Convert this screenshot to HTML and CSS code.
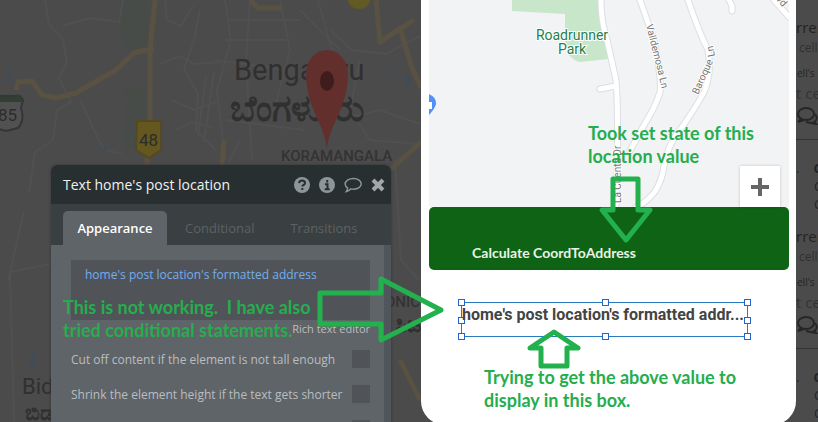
FILE: index.html
```
<!DOCTYPE html>
<html lang="en">
<head>
  <meta charset="UTF-8">
  <meta name="viewport" content="width=device-width, initial-scale=1">
  <title>Text home's post location</title>
  <link rel="stylesheet" href="styles.css">
</head>
<body>
  <main class="editor">

    <section class="desk">
      <svg class="city-map" viewBox="0 0 421 422" preserveAspectRatio="xMaxYMin slice" aria-hidden="true">
        <g class="green-area">
          <path d="M120 0h28v45l-14 10-14-20zM130 88h16v62h-22v-20zM122 88h9v14h-9z"/>
        </g>
        <g class="minor-roads">
          <path d="M45 0l4 24 14 16 4 22-8 16 12 24-14 8-4 30-18 12-6 40M63 26l26-8 30 4 4-22M80 100l14 30 10 20 18 4M165 0l2 20 14 6 12-20M160 64l20-8 14 8 26-2M200 10l-6 30-10 30 14 24-2 36 20 20M172 100l22 10 22-8M176 130l16-8 22 6M225 0l6 40-14 50 8 70M250 0l-4 60 6 100M280 0l10 50-16 60M330 30l22 20 34 4 34-18M360 60l-10 50 20 30 48 4M340 120l40-10 40 14M395 160l6 100 18 20M14 422l-4-150 40-8M24 211l-16 70"/>
          <path d="M230 20h70M226 40h60M215 60l70 10M225 120l80 10M240 140l-12 24M206 76l-8 60M214 72l-10 70M300 10l40 40M318 0l14 50"/>
        </g>
        <g class="main-roads">
          <path d="M155 0l-5 50v70M147 150v20M16 90l2-8 14-1 10 14 14 3 20-5 40-23 18-17 12-3h8M250 0l8 8h24M376 0l4 42 34-22M380 42l20-14 12 40 9 20M390 170l31-28M224 140l-2 25M400 360l20 40"/>
        </g>
        <circle class="town" cx="359" cy="-3" r="12"/>
        <path class="lake" d="M11 58v24l-10-2 8-4zM107 138v13h-4zM408 74l5 6-5 6-5-6zM388 68h4v6h-4zM30 362l6-20v26h-8z"/>
        <g class="shield">
          <path class="shield-white" d="M-8 96h28l3 4-2 8q4 12-3 20l-12 3-14-4z"/>
          <path class="shield-top" d="M-8 94l12 3 4-3 4 3 6-3 5 5-2 3H-8z"/>
          <path class="shield-yellow" d="M137 121h24v29l-12 8-13-8z"/>
        </g>
        <text class="route" x="-2" y="121">85</text>
        <text class="route" x="139" y="146">48</text>
        <text class="city" x="234" y="80">Bengaluru</text>
        <text class="city kannada" x="230" y="121">ಬೆಂಗಳೂರು</text>
        <text class="suburb" x="281" y="161">KORAMANGALA</text>
        <text class="place" x="22" y="394">Bidadi</text>
        <text class="place kannada" x="25" y="420">ಬಿಡದಿ</text>
        <text class="suburb end" x="420" y="307">ELECTRONIC</text>
        <text class="place kannada end" x="421" y="332">ಸಿಟಿ</text>
        <path class="marker" d="M327 149c-2-24-21-42-21-75a21 24 0 0 1 42 0c0 33-19 51-21 75z"/>
        <ellipse class="marker-dot" cx="327" cy="81" rx="7" ry="10"/>
      </svg>

      <div class="panel">
        <header class="panel-header">
          <h1>Text home's post location</h1>
          <div class="panel-tools">
            <button type="button" aria-label="Help">
              <svg width="16" height="16" viewBox="0 0 16 16"><circle cx="8" cy="8" r="8"/><path class="cut" d="M5 6.2q.3-2.7 3-2.7t3 2.4q0 1.3-1.5 2.1-1.1.6-1.1 1.6"/><path class="cut" d="M8.3 11v2"/></svg>
            </button>
            <button type="button" aria-label="Info">
              <svg width="16" height="16" viewBox="0 0 16 16"><circle cx="8" cy="8" r="8"/><path class="cut" d="M8.2 3v2.4M6 7.2h2.5V12M5.7 12.2h5"/></svg>
            </button>
            <button type="button" aria-label="Comment">
              <svg width="18" height="16" viewBox="0 0 18 16"><path class="line" d="M9.5 1.5c4.500 0 7.700 2.400 7.700 5.400s-3.200 5.400-7.700 5.400q-1.500 0-2.800-.4-1.800 2-4.300 2.600 1.300-1.700 1.200-3.600Q1.200 9.400 1.200 6.900c0-3 3.600-5.400 8.300-5.400z"/></svg>
            </button>
            <button type="button" aria-label="Close">
              <svg width="14" height="14" viewBox="0 0 14 14"><path class="cross" d="M2 2l10 10M12 2L2 12"/></svg>
            </button>
          </div>
        </header>
        <nav class="tabs">
          <button type="button" class="tab active">Appearance</button>
          <button type="button" class="tab">Conditional</button>
          <button type="button" class="tab">Transitions</button>
        </nav>
        <div class="panel-body">
          <div class="expression"><a href="#">home's post location's formatted address</a></div>
          <a class="rich-text" href="#">Rich text editor</a>
          <div class="option">
            <label for="cutOff">Cut off content if the element is not tall enough</label>
            <input type="checkbox" id="cutOff">
          </div>
          <div class="option">
            <label for="shrink">Shrink the element height if the text gets shorter</label>
            <input type="checkbox" id="shrink">
          </div>
          <div class="option">
            <label for="collapse"></label>
            <input type="checkbox" id="collapse" aria-label="Collapse when hidden">
          </div>
        </div>
      </div>

      <p class="note note-panel">This is not working.&nbsp; I have also<br>tried conditional statements.</p>
      <svg class="arrow arrow-right" width="128" height="70" viewBox="0 0 128 70"><path d="M3 19h61V5l60 31-60 30V50H3z"/></svg>
    </section>

    <section class="phone">
      <div class="street-map">
        <svg viewBox="0 0 360 207" preserveAspectRatio="xMidYMin slice">
          <path class="park" d="M83 0h87l9 59-28 3q-6-1-12-8l-3-8V14l-53-3z"/>
          <path class="street-edge" d="M172 0q0 22 6 40l9 40q3 30 0 127M171 89l16-3M211 0l14 40q8 40 6 52-4 14-16 33l-14 26M259 0q10 30 20 50 4 24-4 42-6 12-24 38-12 14-16 36-4 30-28 41M300 0l3 6v5M345 0l15 17"/>
          <path class="street" d="M172 0q0 22 6 40l9 40q3 30 0 127M171 89l16-3M211 0l14 40q8 40 6 52-4 14-16 33l-14 26M259 0q10 30 20 50 4 24-4 42-6 12-24 38-12 14-16 36-4 30-28 41M300 0l3 6v5M345 0l15 17"/>
          <path class="poi" d="M-1 94q8 2 8 10-1 5-8 12z"/>
          <path class="poi-mark" d="M0 102h3v7H0z"/>
          <text class="park-name" x="143" y="40">Roadrunner</text>
          <text class="park-name" x="143" y="54">Park</text>
          <text class="street-name" transform="translate(217 25) rotate(76)">Valldemosa Ln</text>
          <text class="street-name" transform="translate(269 95) rotate(-66)">Baroque</text>
          <text class="street-name" transform="translate(286 56) rotate(-102)">Ln</text>
          <text class="street-name" transform="translate(192 203) rotate(-90)">La Cuenta Dr</text>
          <text class="street-name" transform="translate(341 -7) rotate(48)">Blvd</text>
        </svg>
        <button type="button" class="zoom-in" aria-label="Zoom in">
          <svg width="18" height="18" viewBox="0 0 18 18"><path d="M9 0v18M0 9h18"/></svg>
        </button>
      </div>
      <button type="button" class="calculate">Calculate CoordToAddress</button>
      <div class="selected-text">
        home's post location's formatted addr...
        <i class="handle tl"></i><i class="handle tc"></i><i class="handle tr"></i>
        <i class="handle ml"></i><i class="handle mr"></i>
        <i class="handle bl"></i><i class="handle bc"></i><i class="handle br"></i>
      </div>

      <p class="note note-map">Took set state of this<br>location value</p>
      <svg class="arrow arrow-down" width="56" height="70" viewBox="0 0 56 70"><path d="M15 4h25v31h12L28 65 4 35h11z"/></svg>
      <svg class="arrow arrow-up" width="56" height="42" viewBox="0 0 56 42"><path d="M28 4l24 16H41v18H15V20H4z"/></svg>
      <p class="note note-box">Trying to get the above value to<br>display in this box.</p>
    </section>

    <aside class="feed">
      <article class="post">
        <h2>rrent</h2>
        <p class="sub">cell's</p>
        <p class="small">ell's</p>
        <p class="large">t cell</p>
        <svg width="22" height="18" viewBox="0 0 22 18"><ellipse cx="10" cy="7" rx="8" ry="6"/><path d="M5 12l-3 3 6-2M19 7q4 5-1 8l2 2-5-1-5-1"/></svg>
      </article>
      <article class="post short">
        <p>.<b>C</b></p>
        <p class="second">C</p>
        <p class="third">C</p>
      </article>
      <article class="post">
        <h2>rrent</h2>
        <p class="sub">cell's</p>
        <p class="small">ell's</p>
        <p class="large">t cell</p>
        <svg width="22" height="18" viewBox="0 0 22 18"><ellipse cx="10" cy="7" rx="8" ry="6"/><path d="M5 12l-3 3 6-2M19 7q4 5-1 8l2 2-5-1-5-1"/></svg>
      </article>
      <article class="post short">
        <p>.<b>C</b></p>
        <p class="second">C</p>
        <p class="third">C</p>
      </article>
    </aside>

  </main>
</body>
</html>
```
FILE: styles.css
```
* {
  box-sizing: border-box;
}
body {
  margin: 0;
  font-family: "Open Sans", sans-serif;
  background: #4b4b4b;
}
h1, h2, p {
  margin: 0;
}
button {
  border: none;
  padding: 0;
  background: none;
  font-family: inherit;
  cursor: pointer;
}
a {
  text-decoration: none;
}
.editor {
  display: grid;
  grid-template-columns: 1fr 375px 22px;
  align-items: start;
  height: 100vh;
  overflow: hidden;
}

/* map behind the property panel */
.desk {
  position: relative;
  z-index: 2;
  min-height: 100vh;
  padding: 165px 30px 0 51px;
}
.city-map {
  position: absolute;
  top: 0;
  left: 0;
  width: 100%;
  height: 100vh;
  background: #4b4b4b;
  font-family: Roboto, sans-serif;
}
.green-area {
  fill: #484c48;
}
.minor-roads {
  fill: none;
  stroke: #505050;
  stroke-width: 2;
}
.main-roads {
  fill: none;
  stroke: #595242;
  stroke-width: 5;
  stroke-linejoin: round;
}
.town {
  fill: #625a22;
}
.lake {
  fill: #434c54;
}
.shield-white {
  fill: #515151;
  stroke: #353535;
  stroke-width: 2;
}
.shield-top {
  fill: #343d34;
}
.shield-yellow {
  fill: #64571f;
  stroke: #534a23;
  stroke-width: 2;
}
.route {
  font-size: 17px;
  fill: #2c2c2c;
}
.city {
  font-size: 29px;
  fill: #303030;
}
.suburb {
  font-size: 15px;
  font-weight: 500;
  fill: #333;
}
.place {
  font-size: 22px;
  fill: #303030;
}
.end {
  text-anchor: end;
}
.kannada {
  font-family: "Noto Sans", sans-serif;
  font-weight: bold;
}
.city.kannada {
  font-size: 36px;
}
.marker {
  fill: #622f2d;
}
.marker-dot {
  fill: #3e1d1c;
}

/* property panel */
.panel {
  position: relative;
  height: 280px;
  border-radius: 6px 6px 0 0;
  background: #5f6468;
  box-shadow: 0 0 3px #333;
  overflow: hidden;
}
.panel-header {
  display: flex;
  align-items: center;
  justify-content: space-between;
  height: 39px;
  padding: 0 6px 0 12px;
  background: #272f31;
}
.panel-header h1 {
  font-size: 14px;
  font-weight: normal;
  color: #f1f1f1;
}
.panel-tools {
  display: flex;
  align-items: center;
  gap: 9px;
}
.panel-tools button {
  display: flex;
}
.panel-tools svg {
  fill: #8e9598;
}
.panel-tools .cut {
  fill: none;
  stroke: #272f31;
  stroke-width: 2;
}
.panel-tools .line {
  fill: none;
  stroke: #8e9598;
  stroke-width: 1.5;
}
.panel-tools .cross {
  stroke: #a2a8aa;
  stroke-width: 4;
}
.tabs {
  display: flex;
  align-items: flex-end;
  height: 41px;
  padding: 0 12px;
  background: #3a3f41;
}
.tab {
  height: 34px;
  padding: 0 18px;
  border-radius: 5px 5px 0 0;
  font-size: 13px;
  color: #5c6265;
}
.tab.active {
  width: 104px;
  padding: 0;
  background: #5f6468;
  font-weight: 600;
  color: #fff;
}
.panel-body {
  display: flex;
  flex-direction: column;
  min-height: 200px;
  padding: 15px 14px 0 20px;
  border-right: 7px solid #50565b;
}
.expression {
  height: 60px;
  padding: 5px 14px;
  background: #505459;
  font-size: 12px;
  line-height: 20px;
}
.expression a {
  color: #72aef0;
}
.rich-text {
  align-self: flex-end;
  margin-bottom: 12px;
  font-size: 11px;
  line-height: 18px;
  color: #bbbfc2;
}
.option {
  display: flex;
  align-items: center;
  justify-content: space-between;
  height: 18px;
  margin-bottom: 17px;
  font-size: 12px;
  color: #b9bdc0;
  white-space: nowrap;
}
.option input {
  appearance: none;
  width: 18px;
  height: 18px;
  margin: 0;
  background: #505459;
}

/* hand drawn notes */
.note {
  position: absolute;
  font-family: Lato, sans-serif;
  font-size: 18px;
  font-weight: bold;
  line-height: 23px;
  color: #26ad4d;
  white-space: nowrap;
}
.arrow {
  position: absolute;
  fill: none;
  stroke: #22b14c;
  stroke-width: 5;
  stroke-linejoin: round;
}
.note-panel {
  top: 296px;
  left: 63px;
}
.arrow-right {
  top: 274px;
  right: -24px;
}
.note-map {
  top: 122px;
  left: 167px;
}
.arrow-down {
  top: 175px;
  left: 177px;
}
.arrow-up {
  top: 328px;
  left: 105px;
}
.note-box {
  top: 366px;
  left: 63px;
}

/* phone page */
.phone {
  position: relative;
  padding: 0 7px 88px 8px;
  border-radius: 0 0 24px 24px;
  background: #fff;
}
.street-map {
  position: relative;
  height: 207px;
  background: #f1f3f4;
}
.street-map > svg {
  display: block;
  width: 100%;
  height: 100%;
  font-family: Roboto, sans-serif;
}
.park {
  fill: #c8e6c9;
}
.street-edge {
  fill: none;
  stroke: #dcdfe1;
  stroke-width: 7;
  stroke-linecap: round;
}
.street {
  fill: none;
  stroke: #fff;
  stroke-width: 5;
  stroke-linecap: round;
}
.poi {
  fill: #5491f5;
}
.poi-mark {
  fill: #fff;
}
.park-name {
  font-size: 14px;
  fill: #258049;
  stroke: #fff;
  stroke-width: 2;
  paint-order: stroke;
  text-anchor: middle;
}
.street-name {
  font-size: 10px;
  fill: #757575;
  stroke: #fff;
  stroke-width: 2;
  paint-order: stroke;
}
.zoom-in {
  position: absolute;
  right: 9px;
  bottom: 0;
  display: flex;
  align-items: center;
  justify-content: center;
  width: 40px;
  height: 41px;
  background: #fff;
  box-shadow: 0 0 3px rgba(0, 0, 0, 0.2);
}
.zoom-in path {
  stroke: #666;
  stroke-width: 4;
}
.calculate {
  display: block;
  width: 100%;
  height: 63px;
  padding: 27px 110px 0 0;
  border-radius: 5px;
  background: #0e6414;
  font-family: Lato, sans-serif;
  font-size: 14px;
  font-weight: bold;
  color: #e6f3e6;
}
.selected-text {
  position: relative;
  z-index: 0;
  height: 35px;
  margin: 32px 41px 0 32px;
  border: 1px solid #2a7ac0;
  font-family: Roboto, sans-serif;
  font-size: 16px;
  font-weight: bold;
  line-height: 24px;
  color: #444;
  white-space: nowrap;
}
.handle {
  position: absolute;
  z-index: -1;
  width: 7px;
  height: 7px;
  border: 1px solid #2365cc;
  background: #fff;
}
.tl, .tc, .tr {
  top: -4px;
}
.ml, .mr {
  top: 14px;
}
.bl, .bc, .br {
  bottom: -4px;
}
.tl, .ml, .bl {
  left: -4px;
}
.tc, .bc {
  left: calc(50% - 3px);
}
.tr, .mr, .br {
  right: -4px;
}

/* repeating posts cut off at the window edge */
.feed {
  height: 100vh;
  padding-top: 16px;
  overflow: hidden;
  color: #242424;
  white-space: nowrap;
}
.post {
  height: 124px;
  border-bottom: 1px solid #333;
}
.post.short {
  height: 85px;
  padding-top: 19px;
  border: none;
}
.post h2 {
  font-size: 15px;
  font-weight: normal;
  line-height: 22px;
}
.post p {
  line-height: 18px;
  font-size: 13px;
}
.post .sub {
  padding-left: 3px;
  line-height: 20px;
  font-size: 12px;
  color: #303030;
}
.post .small {
  padding: 5px 0 0 1px;
  line-height: 20px;
  font-size: 10px;
}
.post .large {
  line-height: 20px;
  font-size: 15px;
  color: #333;
}
.post svg {
  display: block;
  margin-top: 4px;
  fill: none;
  stroke: #262626;
  stroke-width: 2;
}
.post b {
  padding-left: 14px;
}
.post .second, .post .third {
  padding-left: 18px;
}
```
